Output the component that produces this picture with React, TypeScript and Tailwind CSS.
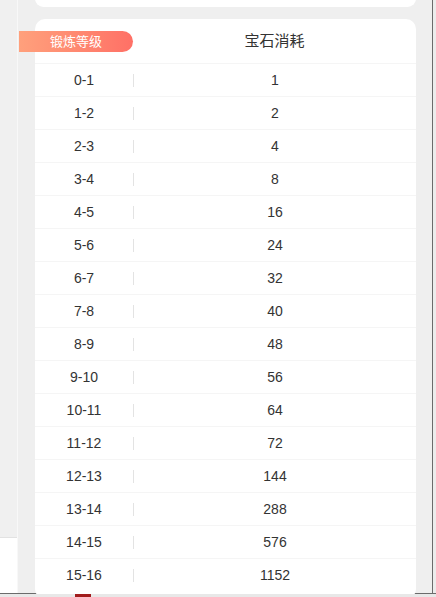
const rows: [string, string][] = [
  ['0-1', '1'],
  ['1-2', '2'],
  ['2-3', '4'],
  ['3-4', '8'],
  ['4-5', '16'],
  ['5-6', '24'],
  ['6-7', '32'],
  ['7-8', '40'],
  ['8-9', '48'],
  ['9-10', '56'],
  ['10-11', '64'],
  ['11-12', '72'],
  ['12-13', '144'],
  ['13-14', '288'],
  ['14-15', '576'],
  ['15-16', '1152'],
];

export default function App() {
  return (
    <div
      className="w-[436px] h-[597px] overflow-hidden bg-[#efefef] flex flex-col"
      style={{ fontFamily: '"Liberation Sans", Arial, "Noto Sans CJK SC", sans-serif' }}
    >
      <div className="flex h-[594px] border-b border-[#6b6b6b]">
        {/* left strip */}
        <div className="w-[17px] flex flex-col bg-[#f0f0f0]">
          <div className="h-[538px] border-b border-[#e2e2e2]" />
          <div className="flex-1 bg-white" />
        </div>
        <div className="w-px bg-[#f8f8f8]" />

        {/* content */}
        <div className="w-[414px] pl-[17px] pr-[16px] flex flex-col gap-[12px] -mt-[10px]">
          <div className="h-[17px] bg-white rounded-[10px] shrink-0" />
          <div className="bg-white rounded-[10px] flex flex-col h-[580px] shrink-0">
            {/* header */}
            <div className="h-[45px] flex items-center border-b border-[#f5f5f5] shrink-0">
              <div className="w-[98px] flex">
                <div className="-ml-[16px] w-[114px] h-[21px] rounded-r-full bg-gradient-to-r from-[#ffa07c] to-[#ff7066] flex items-center justify-center text-white text-[13px] leading-none">
                  锻炼等级
                </div>
              </div>
              <div className="flex-1 text-center text-[15px] text-[#333]">宝石消耗</div>
            </div>
            {rows.map(([lv, cost], i) => (
              <div
                key={lv}
                className={`h-[33px] flex items-center shrink-0 text-[14px] text-[#333] ${
                  i < rows.length - 1 ? 'border-b border-[#f5f5f5]' : ''
                }`}
              >
                <div className="w-[98px] text-center">{lv}</div>
                <div className="w-px h-[13px] bg-[#e3e3e3]" />
                <div className="flex-1 text-center">{cost}</div>
              </div>
            ))}
          </div>
        </div>

        <div className="w-px bg-[#6b6b6b]" />
        <div className="flex-1 bg-[#ececec]" />
      </div>
      {/* bottom strip */}
      <div className="flex-1 flex bg-[#e8e8e8]">
        <div className="ml-[75px] w-[16px] bg-[#a11c1c]" />
      </div>
    </div>
  );
}
